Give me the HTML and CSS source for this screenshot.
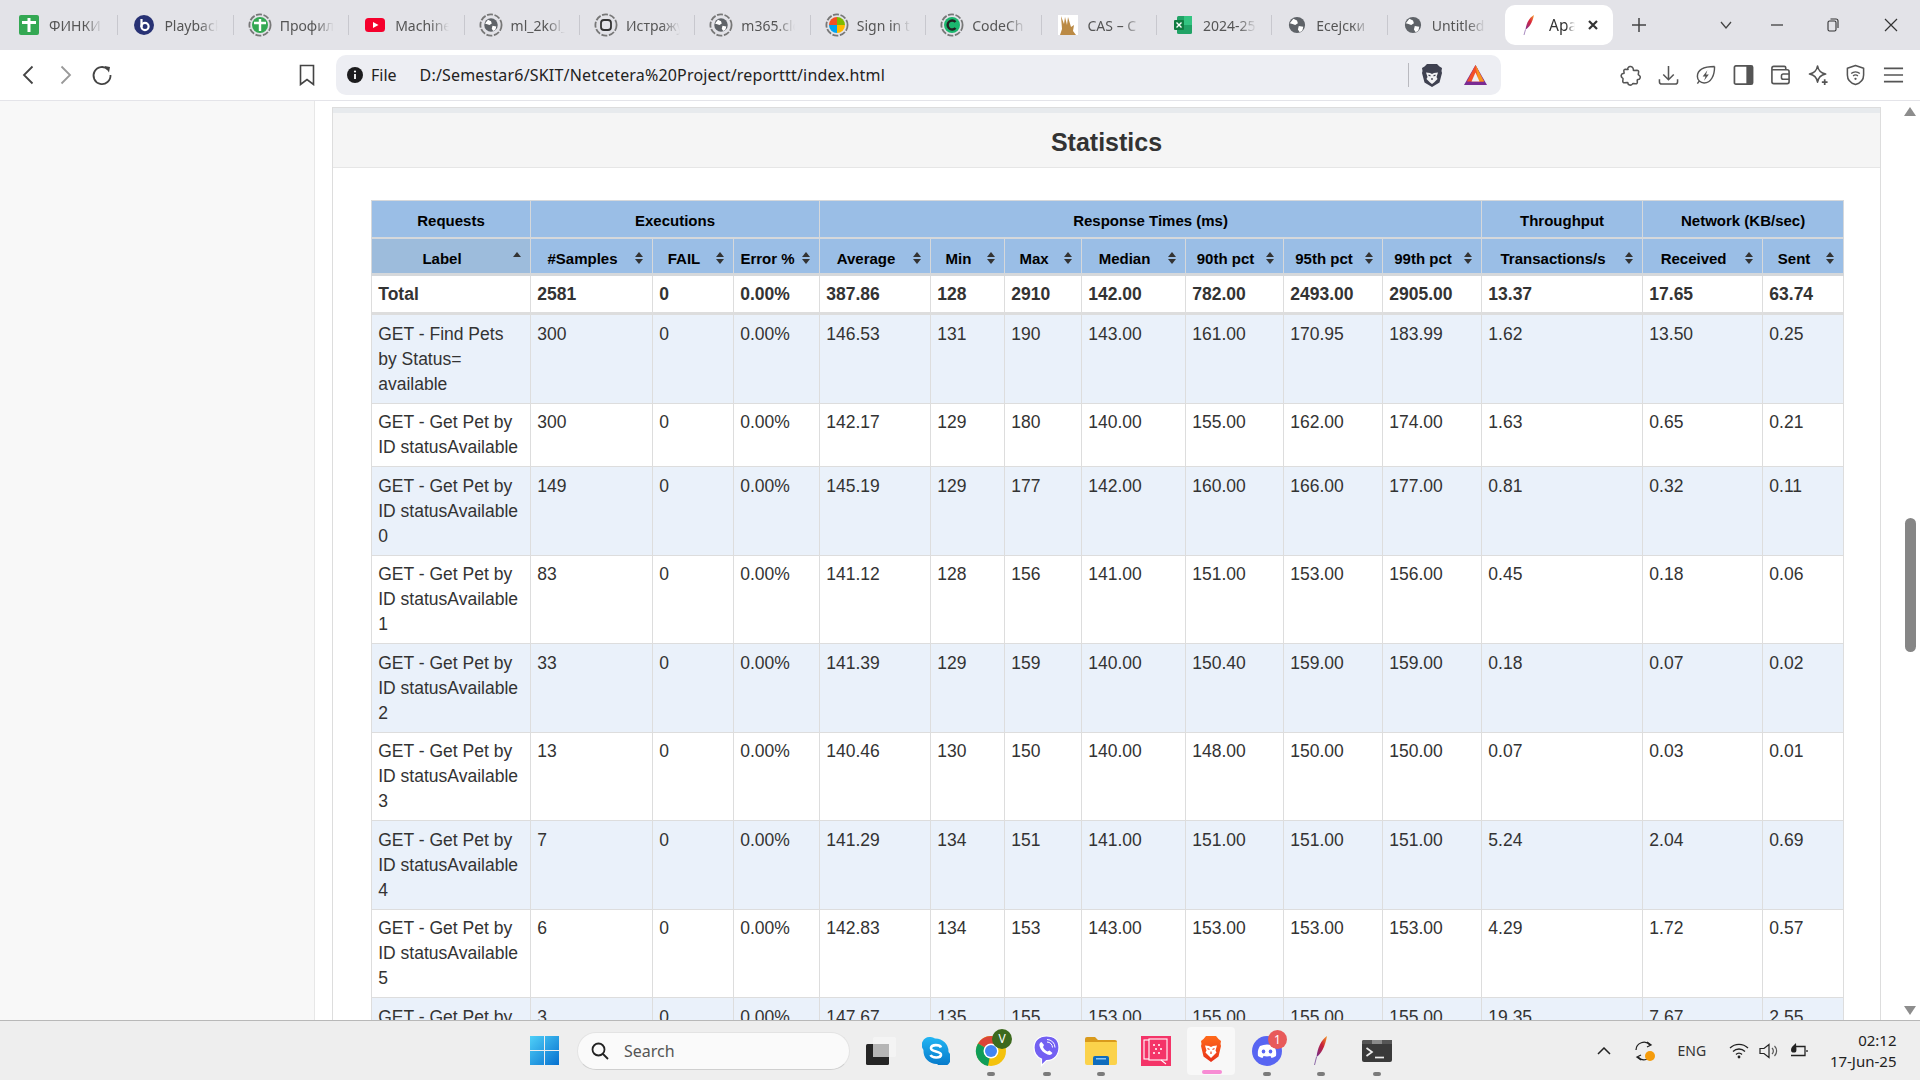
FILE: index.html
```html
<!DOCTYPE html>
<html lang="en">
<head>
<meta charset="utf-8">
<title>Apache JMeter Dashboard</title>
<link rel="stylesheet" href="styles.css">
</head>
<body>
<svg class="defs" aria-hidden="true">
  <symbol id="ring" viewBox="0 0 24 24"><circle cx="12" cy="12" r="10.6" fill="none" stroke="#777" stroke-width="1.8" stroke-dasharray="6 1.6"/></symbol>
  <symbol id="globe" viewBox="0 0 20 20"><circle cx="10" cy="10" r="9" fill="#5f6368"/><path d="M6 3l4 2 1 3-3 2-3-1-3-1zM12 11l5 1-1 4-3 2-2-3z" fill="#fff"/></symbol>
</svg>

<header class="tabbar">
  <div class="tab"><svg class="fav" viewBox="0 0 20 20"><rect width="20" height="20" rx="2" fill="#34a853"/><path d="M10 3v14M3 7.5h14" stroke="#fff" stroke-width="3"/></svg><span class="tabt">ФИНКИ</span></div>
  <div class="tab"><svg class="fav" viewBox="0 0 20 20"><circle cx="10" cy="10" r="10" fill="#283274"/><circle cx="11" cy="11.5" r="3.6" fill="none" stroke="#fff" stroke-width="2.2"/><path d="M7.5 4v8" stroke="#fff" stroke-width="2.2"/></svg><span class="tabt">Playback</span></div>
  <div class="tab"><svg class="fav ringed" viewBox="0 0 24 24"><use href="#ring"/><circle cx="12" cy="12" r="8" fill="#34a853"/><path d="M12 6v12M6 10h12" stroke="#fff" stroke-width="2.4"/></svg><span class="tabt">Профил</span></div>
  <div class="tab"><svg class="fav" viewBox="0 0 20 20"><rect y="3" width="20" height="14" rx="3.5" fill="#f5002c"/><path d="M8 7l5.5 3L8 13z" fill="#fff"/></svg><span class="tabt">Machine</span></div>
  <div class="tab"><svg class="fav ringed" viewBox="0 0 24 24"><use href="#ring"/><use href="#globe" x="4.5" y="4.5" width="15" height="15"/></svg><span class="tabt">ml_2kol_</span></div>
  <div class="tab"><svg class="fav ringed" viewBox="0 0 24 24"><use href="#ring"/><rect x="7" y="7" width="10" height="10" rx="3" fill="none" stroke="#333" stroke-width="1.8"/></svg><span class="tabt">Истражу</span></div>
  <div class="tab"><svg class="fav ringed" viewBox="0 0 24 24"><use href="#ring"/><use href="#globe" x="4.5" y="4.5" width="15" height="15"/></svg><span class="tabt">m365.clo</span></div>
  <div class="tab"><svg class="fav ringed" viewBox="0 0 24 24"><use href="#ring"/><path d="M12 12V4a8 8 0 0 0-8 8z" fill="#f25022"/><path d="M12 12V4a8 8 0 0 1 8 8z" fill="#7fba00"/><path d="M12 12v8a8 8 0 0 1-8-8z" fill="#00a4ef"/><path d="M12 12v8a8 8 0 0 0 8-8z" fill="#ffb900"/></svg><span class="tabt">Sign in t</span></div>
  <div class="tab"><svg class="fav ringed" viewBox="0 0 24 24"><use href="#ring"/><circle cx="12" cy="12" r="8" fill="#1bb76e"/><path d="M15.5 9a4.5 4.5 0 1 0 0 6" fill="none" stroke="#222" stroke-width="2.4"/></svg><span class="tabt">CodeCh</span></div>
  <div class="tab"><svg class="fav" viewBox="0 0 20 20"><rect width="20" height="20" fill="#fff"/><path d="M3 1l3 8 1-7 2 8 1-8 3 10 3-2-1 6 3 4H2l2-6z" fill="#bb8a45"/></svg><span class="tabt">CAS – C</span></div>
  <div class="tab"><svg class="fav" viewBox="0 0 20 20"><rect x="4" y="1" width="15" height="18" rx="1.5" fill="#21a366"/><rect x="11" y="1" width="8" height="9" fill="#33c481"/><rect x="1" y="5" width="10" height="10" rx="1" fill="#107c41"/><path d="M3.5 7.5l5 5M8.5 7.5l-5 5" stroke="#fff" stroke-width="1.4"/></svg><span class="tabt">2024-25</span></div>
  <div class="tab"><svg class="fav small" viewBox="0 0 20 20"><use href="#globe"/></svg><span class="tabt">Есејски</span></div>
  <div class="tab"><svg class="fav small" viewBox="0 0 20 20"><use href="#globe"/></svg><span class="tabt">Untitled</span></div>
  <div class="tab active"><svg class="feather" viewBox="0 0 12 20"><defs><linearGradient id="tf" x1="1" y1="0" x2="0" y2="1"><stop offset="0" stop-color="#f7a12a"/><stop offset=".45" stop-color="#d9263c"/><stop offset="1" stop-color="#7b2f93"/></linearGradient></defs><path d="M11 0C6 3 3.500 8 2.500 14.500 6 12.500 9.500 8 11 0z" fill="url(#tf)"/><path d="M2.500 14.500 1 20" stroke="#a98bc0" stroke-width="1"/></svg><span class="tabt">Apa</span><svg class="tabx" viewBox="0 0 12 12"><path d="M2 2l8 8M10 2l-8 8" stroke="#333" stroke-width="2.200"/></svg></div>
  <svg class="newtab" viewBox="0 0 14 14"><path d="M7 0v14M0 7h14" stroke="#444" stroke-width="1.500"/></svg>
  <div class="winctl">
    <svg class="wc" viewBox="0 0 14 14"><path d="M2 4l5 6 5-6" fill="none" stroke="#444" stroke-width="1.300"/></svg>
    <svg class="wc" viewBox="0 0 14 14"><path d="M1 7h12" stroke="#333" stroke-width="1.200"/></svg>
    <svg class="wc" viewBox="0 0 14 14"><rect x="2" y="3" width="8" height="10" rx="1.500" fill="none" stroke="#333" stroke-width="1.100"/><path d="M4.500 1h5.500a2 2 0 0 1 2 2v7" fill="none" stroke="#333" stroke-width="1.100"/></svg>
    <svg class="wc" viewBox="0 0 14 14"><path d="M1 1l12 12M13 1L1 13" stroke="#333" stroke-width="1.200"/></svg>
  </div>
</header>

<nav class="toolbar">
  <svg class="tbi back" viewBox="0 0 12 20"><path d="M10.500 1.500L2 10l8.500 8.500" fill="none" stroke="#444" stroke-width="1.800"/></svg>
  <svg class="tbi fwd" viewBox="0 0 12 20"><path d="M1.500 1.500L10 10l-8.500 8.500" fill="none" stroke="#999" stroke-width="1.800"/></svg>
  <svg class="tbi reload" viewBox="0 0 22 22"><path d="M17 5.500A8.500 8.500 0 1 0 19.500 11" fill="none" stroke="#444" stroke-width="1.800"/><path d="M13.500 2l5.500 1-1 5.500z" fill="#444"/></svg>
  <svg class="tbi mark" viewBox="0 0 16 22"><path d="M1.500 1.500h13v19L8 15.500l-6.500 5z" fill="none" stroke="#444" stroke-width="1.600"/></svg>
  <div class="addr">
    <svg class="info" viewBox="0 0 16 16"><circle cx="8" cy="8" r="8" fill="#1c1c1e"/><path d="M8 7v5" stroke="#fff" stroke-width="1.800"/><circle cx="8" cy="4.500" r="1.100" fill="#fff"/></svg>
    <span class="file">File</span>
    <span class="url">D:/Semestar6/SKIT/Netcetera%20Project/reporttt/index.html</span>
    <span class="addr-div"></span>
    <svg class="lion" viewBox="0 0 20 23"><path d="M5 0h10l2.500 2.500L20 4l-.5 3 .5 2-2.500 9.500L10 23l-7.500-4.500L0 9l.5-2L0 4l2.500-1.500z" fill="#3f4150"/><path d="M4 8.500l4 .5 2 1 2-1 4-.5-1.500 4.500 1 2L12 18.500 10 20l-2-1.500L4.500 15l1-2z" fill="#f2f2f4"/><path d="M6.500 11l2 1M13.500 11l-2 1M10 14v2" stroke="#3f4150" stroke-width="1.300"/></svg>
    <svg class="bat" viewBox="0 0 23 20"><path d="M11.500 0L23 20H0z" fill="#7a2b93"/><path d="M11.500 0L20 16.500H3z" fill="#f2502a"/><path d="M11.500 0L20 16.500h-5.500z" fill="#f7931e"/><path d="M11.500 7.500l4 9h-8z" fill="#edeef3"/></svg>
  </div>
  <div class="tools">
    <svg class="ti" viewBox="0 0 22 22"><path d="M8 5c-.5-3 5.500-4.500 6 0 0 .8-.2 1 .2 1.300l3.500-.3c1.300 0 2 .8 1.800 2l-.4 2.500c0 .5.400.6 1 .8 2 1.200 1 5-1.500 4.300-.5 0-.6.400-.6.800l.2 2.100c.1 1-.7 1.800-1.800 1.700l-2.700-.3c-.5 0-.6.300-.8.700-1.300 1.800-4.700 1-4.600-1.200 0-.3-.3-.5-.6-.5l-3 .3c-1 .1-1.900-.7-1.800-1.800l.3-2.500c0-.5-.3-.7-.7-.9-2.300-1.500-1-5 1.200-4.600.4 0 .6-.2.600-.6l-.3-2c-.1-1 .7-1.800 1.700-1.700l2 .2c.8 0 .9-.2.700-.5z" fill="none" stroke="#555" stroke-width="1.600" stroke-linejoin="round"/></svg>
    <svg class="ti" viewBox="0 0 22 22"><path d="M11 1.500v14M5.500 10.500l5.500 5.500 5.500-5.500" fill="none" stroke="#555" stroke-width="1.600"/><path d="M1.500 15.500v2.500a2.500 2.500 0 0 0 2.500 2.500h14a2.500 2.500 0 0 0 2.500-2.500v-2.500" fill="none" stroke="#555" stroke-width="1.600"/></svg>
    <svg class="ti" viewBox="0 0 22 22"><path d="M20.500 2C10.500 2 2.500 5 2.500 12.500c0 2 .8 3.500 2 4.800L2.500 20M4.500 17.300c1.300 1.200 3 2 5 2 7.500 0 11-8 11-17.300" fill="none" stroke="#555" stroke-width="1.500"/><path d="M13 6l-5 6.500h3L9.500 17l5-6.500h-3z" fill="#555"/></svg>
    <svg class="ti" viewBox="0 0 22 22"><rect x="1.500" y="1.500" width="19" height="19" rx="1.500" fill="none" stroke="#555" stroke-width="1.800"/><rect x="14" y="1.500" width="6.500" height="19" fill="#555"/></svg>
    <svg class="ti" viewBox="0 0 22 22"><path d="M16.500 5.500V3.500A1.500 1.500 0 0 0 15 2H4A2 2 0 0 0 2 4v14a2 2 0 0 0 2 2h14a2 2 0 0 0 2-2V7.500a2 2 0 0 0-2-2H2.500" fill="none" stroke="#555" stroke-width="1.700"/><path d="M20 10h-6a2 2 0 0 0-2 2v1.500a2 2 0 0 0 2 2h6" fill="none" stroke="#555" stroke-width="1.600"/></svg>
    <svg class="ti" viewBox="0 0 22 22"><path d="M10 1.500c.8 5 3 7.500 8.500 8.500-5.500 1-7.700 3.500-8.500 8.500-.8-5-3-7.500-8.500-8.500C7 9 9.200 6.500 10 1.500z" fill="none" stroke="#555" stroke-width="1.600" stroke-linejoin="round"/><path d="M17.500 15.500v6M14.500 18.500h6" stroke="#555" stroke-width="1.800"/></svg>
    <svg class="ti" viewBox="0 0 22 22"><path d="M11 1l8.500 3v7c0 5-3.500 8.500-8.500 10-5-1.500-8.500-5-8.500-10V4z" fill="none" stroke="#555" stroke-width="1.600" stroke-linejoin="round"/><path d="M6.500 9.500a6.500 6.500 0 0 1 9 0M8.500 12a3.500 3.500 0 0 1 5 0" fill="none" stroke="#555" stroke-width="1.400"/><circle cx="11" cy="15" r="1.200" fill="#555"/></svg>
    <svg class="ti" viewBox="0 0 22 22"><path d="M1 4h20M1 11h20M1 18h20" stroke="#555" stroke-width="1.800"/></svg>
  </div>
</nav>

<main class="viewport">
  <aside class="sidebar"></aside>
  <div class="content">
    <section class="panel">
      <div class="panel-strip"></div>
      <h2 class="panel-head">Statistics</h2>
      <div class="panel-body">
        <table class="stats">
          <colgroup>
            <col class="c1"><col class="c2"><col class="c3"><col class="c4"><col class="c5"><col class="c6"><col class="c7"><col class="c8"><col class="c9"><col class="c10"><col class="c11"><col class="c12"><col class="c13"><col class="c14">
          </colgroup>
          <thead>
            <tr class="group"><th>Requests</th><th colspan="3">Executions</th><th colspan="7">Response Times (ms)</th><th>Throughput</th><th colspan="2">Network (KB/sec)</th></tr>
            <tr class="cols">
              <th class="sorted"><span>Label</span></th><th class="both"><span>#Samples</span></th><th class="both"><span>FAIL</span></th><th class="both"><span>Error %</span></th><th class="both"><span>Average</span></th><th class="both"><span>Min</span></th><th class="both"><span>Max</span></th><th class="both"><span>Median</span></th><th class="both"><span>90th pct</span></th><th class="both"><span>95th pct</span></th><th class="both"><span>99th pct</span></th><th class="both"><span>Transactions/s</span></th><th class="both"><span>Received</span></th><th class="both"><span>Sent</span></th>
            </tr>
          </thead>
          <tbody class="total">
            <tr><td>Total</td><td>2581</td><td>0</td><td>0.00%</td><td>387.86</td><td>128</td><td>2910</td><td>142.00</td><td>782.00</td><td>2493.00</td><td>2905.00</td><td>13.37</td><td>17.65</td><td>63.74</td></tr>
          </tbody>
          <tbody class="rows">
            <tr><td>GET - Find Pets by Status= available</td><td>300</td><td>0</td><td>0.00%</td><td>146.53</td><td>131</td><td>190</td><td>143.00</td><td>161.00</td><td>170.95</td><td>183.99</td><td>1.62</td><td>13.50</td><td>0.25</td></tr>
            <tr><td>GET - Get Pet by ID statusAvailable</td><td>300</td><td>0</td><td>0.00%</td><td>142.17</td><td>129</td><td>180</td><td>140.00</td><td>155.00</td><td>162.00</td><td>174.00</td><td>1.63</td><td>0.65</td><td>0.21</td></tr>
            <tr><td>GET - Get Pet by ID statusAvailable 0</td><td>149</td><td>0</td><td>0.00%</td><td>145.19</td><td>129</td><td>177</td><td>142.00</td><td>160.00</td><td>166.00</td><td>177.00</td><td>0.81</td><td>0.32</td><td>0.11</td></tr>
            <tr><td>GET - Get Pet by ID statusAvailable 1</td><td>83</td><td>0</td><td>0.00%</td><td>141.12</td><td>128</td><td>156</td><td>141.00</td><td>151.00</td><td>153.00</td><td>156.00</td><td>0.45</td><td>0.18</td><td>0.06</td></tr>
            <tr><td>GET - Get Pet by ID statusAvailable 2</td><td>33</td><td>0</td><td>0.00%</td><td>141.39</td><td>129</td><td>159</td><td>140.00</td><td>150.40</td><td>159.00</td><td>159.00</td><td>0.18</td><td>0.07</td><td>0.02</td></tr>
            <tr><td>GET - Get Pet by ID statusAvailable 3</td><td>13</td><td>0</td><td>0.00%</td><td>140.46</td><td>130</td><td>150</td><td>140.00</td><td>148.00</td><td>150.00</td><td>150.00</td><td>0.07</td><td>0.03</td><td>0.01</td></tr>
            <tr><td>GET - Get Pet by ID statusAvailable 4</td><td>7</td><td>0</td><td>0.00%</td><td>141.29</td><td>134</td><td>151</td><td>141.00</td><td>151.00</td><td>151.00</td><td>151.00</td><td>5.24</td><td>2.04</td><td>0.69</td></tr>
            <tr><td>GET - Get Pet by ID statusAvailable 5</td><td>6</td><td>0</td><td>0.00%</td><td>142.83</td><td>134</td><td>153</td><td>143.00</td><td>153.00</td><td>153.00</td><td>153.00</td><td>4.29</td><td>1.72</td><td>0.57</td></tr>
            <tr><td>GET - Get Pet by ID statusAvailable 6</td><td>3</td><td>0</td><td>0.00%</td><td>147.67</td><td>135</td><td>155</td><td>153.00</td><td>155.00</td><td>155.00</td><td>155.00</td><td>19.35</td><td>7.67</td><td>2.55</td></tr>
          </tbody>
        </table>
      </div>
    </section>
  </div>
  <div class="scrollbar">
    <span class="arrow up"></span>
    <span class="track"><span class="thumb"></span></span>
    <span class="arrow down"></span>
  </div>
</main>

<footer class="taskbar">
  <svg class="winlogo" viewBox="0 0 29 29"><defs><linearGradient id="w" x1="0" y1="0" x2="1" y2="1"><stop offset="0" stop-color="#4fd0f8"/><stop offset="1" stop-color="#0670cf"/></linearGradient></defs><path d="M0 0h14v14H0zM15 0h14v14H15zM0 15h14v14H0zM15 15h14v14H15z" fill="url(#w)"/></svg>
  <div class="search">
    <svg class="mag" viewBox="0 0 18 18"><circle cx="7.500" cy="7.500" r="6" fill="none" stroke="#222" stroke-width="1.800"/><path d="M12 12l5 5" stroke="#222" stroke-width="1.800"/></svg>
    <span>Search</span>
  </div>
  <div class="apps">
    <div class="app w-task"><svg viewBox="0 0 30 28"><rect x="0" y="7" width="23" height="21" rx="1.500" fill="#252525"/><rect x="7" y="0" width="23" height="20" rx="1.500" fill="#f4f4f4"/><rect x="7" y="7" width="16" height="13" fill="#b5b5b5"/></svg></div>
    <div class="app w-skype"><svg viewBox="0 0 28 28"><defs><linearGradient id="sk" x1="0" y1="0" x2="0" y2="1"><stop offset="0" stop-color="#22b5f3"/><stop offset="1" stop-color="#0678c9"/></linearGradient></defs><path d="M8 0a8 8 0 0 1 5 1.500 13 13 0 0 1 13.500 13.500A8 8 0 0 1 15 27 13 13 0 0 1 1.500 13 8 8 0 0 1 8 0z" fill="url(#sk)"/><path d="M19 10.500c-1-3-9.500-3.500-10 .5-.5 4.500 10.500 2.500 10 7-.5 3.500-9 3-10.500 0" fill="none" stroke="#fff" stroke-width="2.600"/></svg></div>
    <div class="app w-chrome"><svg viewBox="0 0 32 32"><circle cx="16" cy="16" r="15" fill="#f4c20d"/><path d="M16 16L3 8.500A15 15 0 0 1 29 8.500z" fill="#db4437"/><path d="M16 16L3 8.500A15 15 0 0 0 13 31z" fill="#0f9d58"/><circle cx="16" cy="16" r="7.500" fill="#fff"/><circle cx="16" cy="16" r="6" fill="#4285f4"/></svg><span class="badge green">V</span><i class="dot"></i></div>
    <div class="app w-viber"><svg viewBox="0 0 27 32"><path d="M13.500 1C6 1 1 5.500 1 12.500 1 18 3.500 22 8.500 24v6.500l5-5c7.500 0 12.500-5.500 12.500-13S21 1 13.500 1z" fill="#7360f2" stroke="#fff" stroke-width="1.200"/><path d="M8.500 7l2.500 3-1 2c1 2 2.500 3.500 4.500 4.500l2-1 3 2.500c-1 2-3 2.500-5 1.500-4-1.500-7-4.500-8-8.500-.5-2 .5-3.500 2-4z" fill="#fff"/><path d="M14 7a5.500 5.500 0 0 1 5.500 5.500M14 4.500a8 8 0 0 1 8 8" fill="none" stroke="#fff" stroke-width="1"/></svg><i class="dot"></i></div>
    <div class="app w-files"><svg viewBox="0 0 32 28"><path d="M0 2a2 2 0 0 1 2-2h8l3 3h17a2 2 0 0 1 2 2v3H0z" fill="#d99a1c"/><path d="M0 5h32v21a2 2 0 0 1-2 2H2a2 2 0 0 1-2-2z" fill="#fbd24b"/><path d="M8 28v-7a2 2 0 0 1 2-2h12a2 2 0 0 1 2 2v7z" fill="#0f6cbd"/><rect x="11" y="21" width="10" height="1.500" fill="#8ec7f5"/></svg><i class="dot"></i></div>
    <div class="app w-pink"><svg viewBox="0 0 30 30"><rect width="30" height="30" fill="#f43468"/><rect x="3" y="4" width="15" height="19" fill="none" stroke="#fff" stroke-width="1.100"/><rect x="8" y="3" width="18" height="21" fill="#f43468" stroke="#fff" stroke-width="1.100"/><path d="M12 9h2M17 9h2M14 13h2M19 13h2M12 17h2M17 17h2" stroke="#fff" stroke-width="1.500"/><path d="M20 24l5 4" stroke="#fff" stroke-width="1.100"/></svg></div>
    <div class="app w-brave"><svg viewBox="0 0 20 26"><defs><linearGradient id="br" x1="0" y1="0" x2="0" y2="1"><stop offset="0" stop-color="#ff6a1a"/><stop offset="1" stop-color="#e8321b"/></linearGradient></defs><path d="M5 0h10l2.500 3L20 5l-.5 3 .5 2-2.500 10.500L10 26l-7.500-5.500L0 10l.5-2L0 5l2.500-2z" fill="url(#br)"/><path d="M4 9.500l4 .5 2 1 2-1 4-.5-1.500 5 1 2L12 20l-2 2-2-2-3.500-3.500 1-2z" fill="#fff"/><path d="M6.500 12.500l2 1M13.500 12.500l-2 1M10 15.500v2.500" stroke="#f1471d" stroke-width="1.200"/></svg><i class="bar"></i></div>
    <div class="app w-discord"><svg viewBox="0 0 30 30"><circle cx="15" cy="15" r="15" fill="#5865f2"/><path d="M8 10c4.500-2 9.500-2 14 0 2 3 2.500 6 2 10-1.500 1-3 1.500-4.500 2l-1-2c-2 .5-5 .5-7 0l-1 2c-1.500-.5-3-1-4.500-2-.5-4 0-7 2-10z" fill="#fff"/><ellipse cx="11.500" cy="15.500" rx="1.800" ry="2" fill="#5865f2"/><ellipse cx="18.500" cy="15.500" rx="1.800" ry="2" fill="#5865f2"/></svg><span class="badge red">1</span><i class="dot"></i></div>
    <div class="app w-feather"><svg viewBox="0 0 15 29"><defs><linearGradient id="f" x1="1" y1="0" x2="0" y2="1"><stop offset="0" stop-color="#f69923"/><stop offset=".45" stop-color="#c92037"/><stop offset="1" stop-color="#6d2d8f"/></linearGradient></defs><path d="M14 0C8 4 4.500 12 3.500 21c4.500-3 8.500-10 10.500-21z" fill="url(#f)"/><path d="M3.500 21 1.500 29" stroke="#8d6aa8" stroke-width="1"/></svg><i class="dot"></i></div>
    <div class="app w-term"><svg viewBox="0 0 30 22"><rect width="30" height="22" rx="2" fill="#3a3a3a"/><path d="M0 2a2 2 0 0 1 2-2h8v4H0z" fill="#555"/><rect x="10" width="10" height="4" fill="#8a8a8a"/><rect x="20" width="10" height="4" fill="#555"/><path d="M4.500 8l5.500 4-5.500 4" fill="none" stroke="#eee" stroke-width="1.700"/><path d="M13 17.500h9" stroke="#eee" stroke-width="1.700"/></svg><i class="dot"></i></div>
  </div>
  <div class="tray">
    <svg class="tr-chev" viewBox="0 0 14 8"><path d="M1 7l6-6 6 6" fill="none" stroke="#222" stroke-width="1.500"/></svg>
    <span class="sync"><svg viewBox="0 0 20 20"><path d="M2 9a8 8 0 0 1 14-5M18 11a8 8 0 0 1-14 5" fill="none" stroke="#222" stroke-width="1.300"/><path d="M13 1l4 3-4 2M7 19l-4-3 4-2" fill="none" stroke="#222" stroke-width="1.300"/></svg><i></i></span>
    <span class="lang">ENG</span>
    <svg class="tr-i" viewBox="0 0 20 16"><path d="M1 5a13 13 0 0 1 18 0M4 8.500a8.500 8.500 0 0 1 12 0M7 11.500a4 4 0 0 1 6 0" fill="none" stroke="#222" stroke-width="1.300"/><circle cx="10" cy="14" r="1.400" fill="#222"/></svg>
    <svg class="tr-i" viewBox="0 0 20 16"><path d="M1 5.500h4L10 1.500v13l-5-4H1z" fill="none" stroke="#222" stroke-width="1.200"/><path d="M13 5a4 4 0 0 1 0 6M15.500 3a7 7 0 0 1 0 10" fill="none" stroke="#555" stroke-width="1.200"/></svg>
    <svg class="tr-i" viewBox="0 0 20 16"><path d="M7 3.500h9v9H2M18 7v2" fill="none" stroke="#222" stroke-width="1.300"/><path d="M7 0C4 3 2 4 2 7s3 3 5 2c1-2 0-5 0-9z" fill="#222"/></svg>
    <div class="clock"><span>02:12</span><span>17-Jun-25</span></div>
  </div>
</footer>
</body>
</html>
```
FILE: styles.css
```css
* { box-sizing: border-box; }
html, body { margin: 0; height: 100%; }
body {
  width: 1920px; height: 1080px; overflow: hidden;
  display: flex; flex-direction: column;
  font-family: "Liberation Sans", Arial, sans-serif; background: #fff;
}
.defs { display: none; }

/* tabs */
.tabbar { height: 50px; flex: none; background: #e3e3e8; display: flex; align-items: center; padding-left: 3px; }
.tab { width: 115.4px; height: 40px; flex: none; display: flex; align-items: center; gap: 10px; padding: 0 0 0 16px; position: relative; font: 14px "Noto Sans", sans-serif; color: #555; }
.tab::after { content: ""; position: absolute; right: 0; top: 10px; height: 20px; width: 1px; background: #c8c8ce; }
.tab:nth-child(13)::after, .tab.active::after { display: none; }
.fav { width: 20px; height: 20px; flex: none; }
.fav.ringed { width: 24px; height: 24px; margin-left: -2px; margin-right: -2px; }
.fav.small { width: 18px; height: 18px; }
.tabt { width: 54px; overflow: hidden; white-space: nowrap; -webkit-mask-image: linear-gradient(90deg, #000 65%, transparent); mask-image: linear-gradient(90deg, #000 65%, transparent); }
.tab.active { width: 108px; margin-left: 2px; background: #fff; border-radius: 10px; padding-left: 18px; gap: 14px; color: #333; font-size: 15.5px; }
.tab.active .tabt { width: 26px; }
.feather { width: 12px; height: 20px; flex: none; }
.tabx { width: 12px; height: 12px; margin-left: -2px; flex: none; }
.newtab { width: 14px; height: 14px; margin-left: 19px; flex: none; }
.winctl { display: flex; align-items: center; margin-left: 73px; }
.wc { width: 14px; height: 14px; flex: none; }
.wc:nth-child(2) { margin-left: 37px; }
.wc:nth-child(3) { margin-left: 42px; }
.wc:nth-child(4) { margin-left: 44px; }

/* toolbar */
.toolbar { height: 51px; flex: none; background: #fff; border-bottom: 1px solid #e4e4e9; display: flex; align-items: center; padding-left: 22px; }
.tbi { flex: none; }
.back { width: 12px; height: 20px; }
.fwd { width: 12px; height: 20px; margin-left: 26px; }
.reload { width: 22px; height: 22px; margin-left: 19px; }
.mark { width: 16px; height: 22px; margin-left: 186px; }
.addr { width: 1165px; height: 40px; margin-left: 21px; flex: none; background: #edeef3; border-radius: 10px; display: flex; align-items: center; padding-left: 11px; }
.info { width: 16px; height: 16px; flex: none; }
.file { margin-left: 8px; font: 16px "Noto Sans", sans-serif; color: #222; }
.url { margin-left: 23px; font: 16px "Noto Sans", sans-serif; color: #222; width: 567px; white-space: nowrap; letter-spacing: .18px; }
.addr-div { width: 1px; height: 24px; background: #b9b9bf; margin-left: 421px; flex: none; }
.lion { width: 20px; height: 23px; margin-left: 13px; flex: none; }
.bat { width: 23px; height: 20px; margin-left: 22px; flex: none; }
.tools { display: flex; gap: 16.5px; margin-left: 119px; }
.ti { width: 21px; height: 22px; flex: none; }

/* page viewport */
.viewport { flex: 1; min-height: 0; display: flex; overflow: hidden; background: #fff; }
.sidebar { width: 315px; flex: none; background: #f8f8f8; border-right: 1px solid #e7e7e7; }
.content { flex: 1; min-width: 0; padding: 6px 19px 0 17px; }
.panel { border: 1px solid #ddd; border-bottom: 0; }
.panel-strip { height: 5px; background: #e7eaed; }
.panel-head { margin: 0; height: 55px; background: #f5f5f5; border-bottom: 1px solid #e6e6e6; font-size: 25px; font-weight: 700; color: #333; line-height: 59px; text-align: center; }
.panel-body { padding: 32px 37px 0 38px; }

/* table */
.stats { width: 1472px; table-layout: fixed; border-collapse: collapse; font-size: 17.5px; line-height: 25px; color: #333; }
.c1 { width: 159px; } .c2 { width: 122px; } .c3 { width: 81px; } .c4 { width: 86px; } .c5 { width: 111px; } .c6 { width: 74px; } .c7 { width: 77px; } .c8 { width: 104px; } .c9 { width: 98px; } .c10 { width: 99px; } .c11 { width: 99px; } .c12 { width: 161px; } .c13 { width: 120px; } .c14 { width: 81px; }
.stats th { background: #9abee6; color: #000; font-size: 15px; font-weight: 700; text-align: center; border: 1px solid #d5d8db; line-height: 20px; position: relative; }
.group th { height: 37px; padding: 9px 4px 5px; }
.cols th { height: 36.5px; padding: 10px 24px 3px 6px; border-bottom: 3px solid #d5d8db; border-top: 2px solid #d5d8db; white-space: nowrap; }
.cols th.sorted { background: #9dbcdc; }
.cols th::before, .cols th::after { content: ""; position: absolute; right: 9px; width: 0; height: 0; border-left: 4.5px solid transparent; border-right: 4.5px solid transparent; }
.cols th::before { top: 13px; border-bottom: 5px solid #333; }
.cols th::after { top: 20px; border-top: 5px solid #333; }
.cols th.sorted::after { display: none; }
.stats td { padding: 6.25px 5.5px 6.25px 6.25px; border: 1px solid #ddd; vertical-align: top; }
.total td { font-weight: 700; border-bottom: 3px solid #ddd; padding-top: 6.5px; padding-bottom: 5.25px; }
.rows tr:nth-child(odd) td { background: #eaf1fa; }

/* scrollbar */
.scrollbar { width: 20px; flex: none; background: #fff; display: flex; flex-direction: column; align-items: center; padding: 6px 0 5px; position: relative; }
.arrow { width: 0; height: 0; border-left: 6px solid transparent; border-right: 6px solid transparent; flex: none; }
.arrow.up { border-bottom: 9px solid #8d8d8d; }
.arrow.down { border-top: 9px solid #8d8d8d; }
.track { flex: 1; display: block; padding-top: 402px; }
.thumb { display: block; width: 11px; height: 134px; background: #868686; border-radius: 6px; }

/* taskbar */
.taskbar { height: 60px; flex: none; background: #eeeeee; border-top: 1px solid #b8b8b8; display: flex; align-items: center; padding-left: 530px; }
.winlogo { width: 29px; height: 29px; flex: none; }
.search { width: 273px; height: 38px; margin-left: 18px; flex: none; background: #fafafa; border: 1px solid #e3e3e3; border-bottom-color: #cfcfcf; border-radius: 19px; display: flex; align-items: center; padding-left: 13px; gap: 15px; font: 16px "Noto Sans", sans-serif; color: #555; }
.mag { width: 18px; height: 18px; flex: none; }
.apps { display: flex; align-items: center; margin-left: 16px; height: 100%; }
.app { position: relative; display: flex; align-items: center; justify-content: center; flex: none; height: 100%; }
.app svg { display: block; }
.w-task { width: 30px; } .w-task svg { width: 30px; height: 28px; }
.w-skype { width: 28px; margin-left: 26px; } .w-skype svg { width: 28px; height: 28px; }
.w-chrome { width: 32px; margin-left: 25px; } .w-chrome svg { width: 32px; height: 32px; }
.w-viber { width: 27px; margin-left: 26px; } .w-viber svg { width: 27px; height: 32px; }
.w-files { width: 32px; margin-left: 25px; } .w-files svg { width: 32px; height: 28px; }
.w-pink { width: 30px; margin-left: 24px; } .w-pink svg { width: 30px; height: 30px; }
.w-brave { width: 48px; height: 48px; margin-left: 16px; background: #f8f8f8; border-radius: 4px; } .w-brave svg { width: 20px; height: 26px; margin-top: -4px; }
.w-discord { width: 30px; margin-left: 17px; } .w-discord svg { width: 30px; height: 30px; }
.w-feather { width: 15px; margin-left: 31px; } .w-feather svg { width: 15px; height: 29px; }
.w-term { width: 30px; margin-left: 34px; } .w-term svg { width: 30px; height: 22px; }
.dot { position: absolute; bottom: 4px; left: 50%; width: 8px; height: 4px; margin-left: -4px; border-radius: 2px; background: #7b7b7b; }
.bar { position: absolute; bottom: 1px; left: 15px; width: 20px; height: 4px; border-radius: 2px; background: #f78cd4; }
.badge { position: absolute; top: 3px; right: -6px; width: 20px; height: 20px; border-radius: 50%; color: #fff; font: 12px/20px "Noto Sans", sans-serif; text-align: center; }
.badge.green { background: #3d6a1e; right: -5px; top: 8px; }
.badge.red { background: #e85a5a; width: 19px; height: 19px; line-height: 19px; right: -5px; top: 9px; }
.tray { display: flex; align-items: center; margin-left: 204.5px; }
.tr-chev { width: 14px; height: 8px; flex: none; }
.sync { position: relative; width: 20px; height: 20px; margin-left: 23px; flex: none; }
.sync svg { width: 20px; height: 20px; display: block; }
.sync i { position: absolute; right: -1px; bottom: 0; width: 10px; height: 10px; border-radius: 50%; background: #f59c0c; }
.lang { margin-left: 24px; font: 14px "Noto Sans", sans-serif; color: #333; width: 28px; }
.tr-i { width: 20px; height: 16px; flex: none; margin-left: 10px; }
.lang + .tr-i { margin-left: 23px; }
.clock { margin-left: 15px; width: 73px; display: flex; flex-direction: column; align-items: flex-end; font: 15px/21px "Noto Sans", sans-serif; color: #222; white-space: nowrap; }
```
